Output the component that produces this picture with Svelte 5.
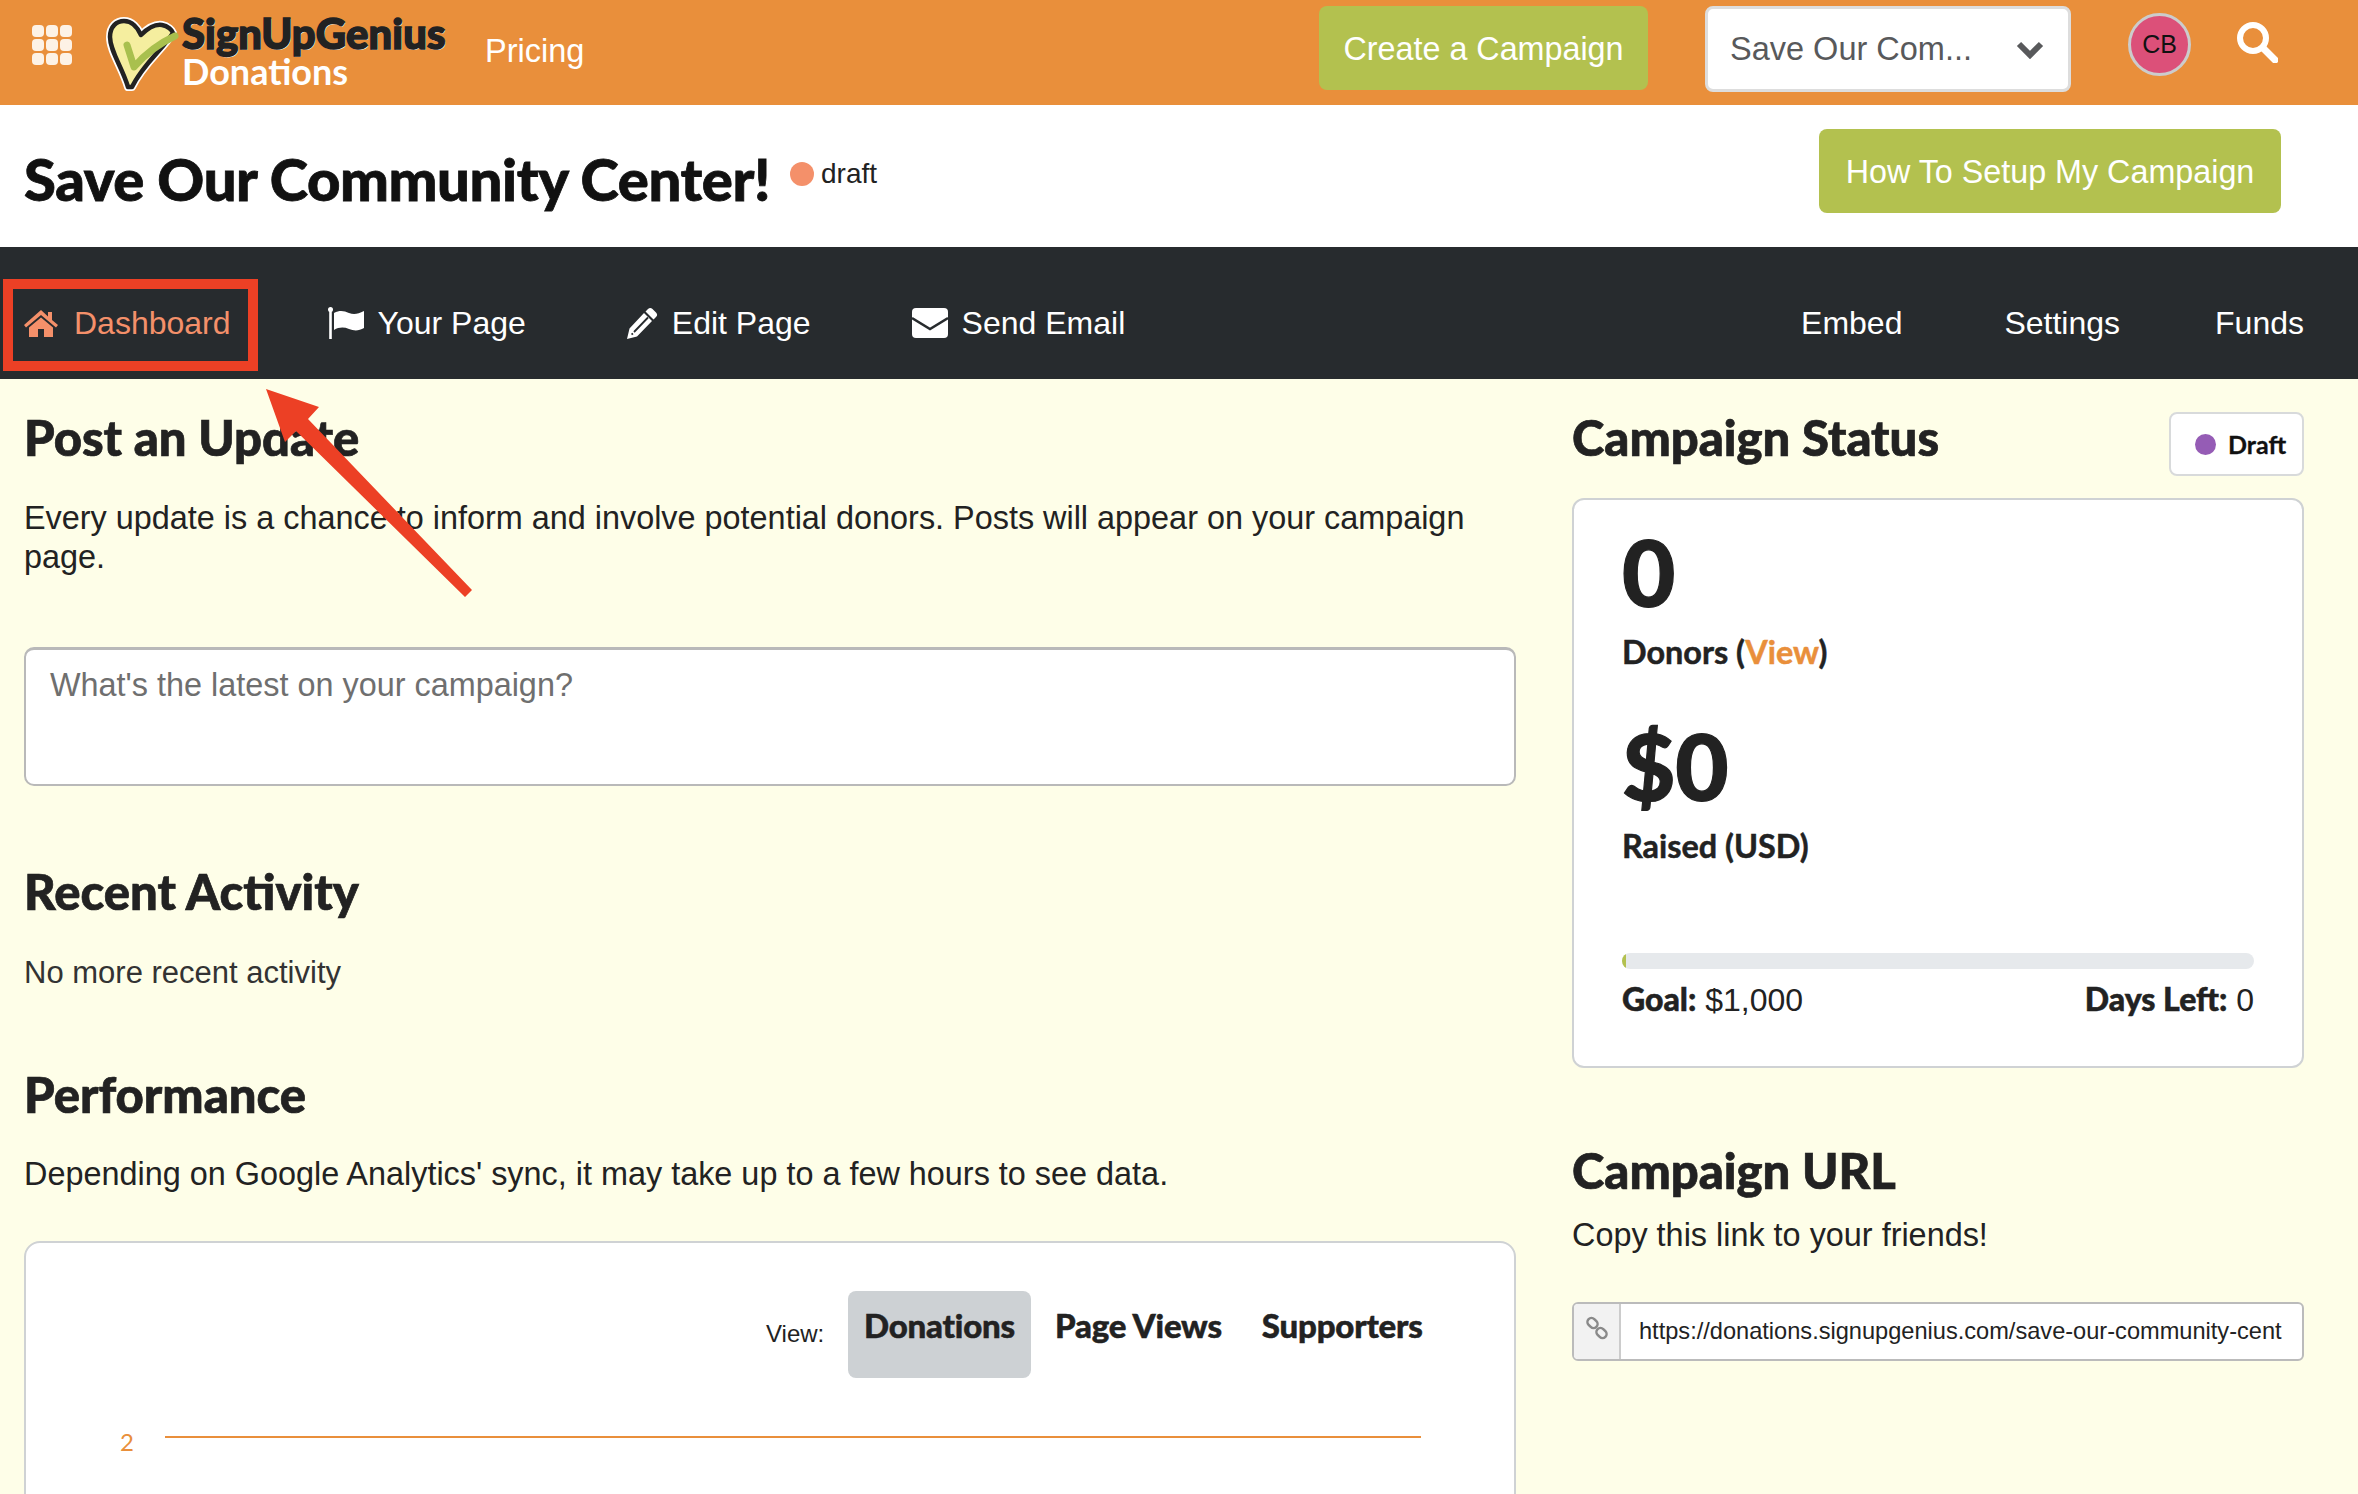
<script>
	const mainNav = [
		{ label: 'Your Page', icon: 'flag' },
		{ label: 'Edit Page', icon: 'pencil' },
		{ label: 'Send Email', icon: 'mail' }
	];
	const sideNav = ['Embed', 'Settings', 'Funds'];
</script>

<div class="page">
	<header class="topbar">
		<div class="grid-icon">
			{#each Array(9) as _}
				<span></span>
			{/each}
		</div>
		<div class="logo">
			<svg class="heart" viewBox="-2 -2 74 74">
				<path d="M20 68C14 48 2 32 2 18 2 7 9 2 16 2c8 0 14 7 17 14C39 10 47 5 54 6c6 1 10 5 11 8C55 30 35 45 24 68Z" fill="#fff" stroke="#fff" stroke-width="8" stroke-linejoin="round" />
				<path d="M20 68C14 48 2 32 2 18 2 7 9 2 16 2c8 0 14 7 17 14C39 10 47 5 54 6c6 1 10 5 11 8C55 30 35 45 24 68Z" fill="#f5ee9f" stroke="#222" stroke-width="4.500" stroke-linejoin="round" />
				<path d="M19 26l7 22C38 34 52 24 67 17" fill="none" stroke="#a9c04e" stroke-width="7" stroke-linecap="round" stroke-linejoin="round" />
			</svg>
			<div class="logo-text">
				<div class="logo-top">SignUpGenius</div>
				<div class="logo-sub">Donations</div>
			</div>
		</div>
		<span class="pricing">Pricing</span>
		<button class="btn create">Create a Campaign</button>
		<div class="select">
			<span>Save Our Com...</span>
			<svg viewBox="0 0 28 20" width="28" height="20"><path d="M3 5l11 11L25 5" fill="none" stroke="#58595b" stroke-width="6" /></svg>
		</div>
		<div class="avatar">CB</div>
		<svg class="search" viewBox="0 0 42 42" width="42" height="42">
			<circle cx="17" cy="17" r="13" fill="none" stroke="#fff" stroke-width="6" />
			<path d="M27 27l12 12" stroke="#fff" stroke-width="7" stroke-linecap="round" />
		</svg>
	</header>

	<div class="titlebar">
		<h1>Save Our Community Center!</h1>
		<span class="status-dot"></span>
		<span class="status-text">draft</span>
		<button class="btn howto">How To Setup My Campaign</button>
	</div>

	<nav class="nav">
		<a class="item active" href="#top">
			<svg viewBox="0 0 34 28" width="34" height="28"><path d="M17 1L0 16l2 2.500L17 6l15 12.500 2-2.500-6-5V3h-4v4.500zM5 18.500V28h9v-8h6v8h9v-9.500L17 8.500z" fill="#f4906a" /></svg>
			Dashboard
		</a>
		{#each mainNav as n}
			<a class="item" href="#top">
				{#if n.icon === 'flag'}
					<svg viewBox="0 0 36 32" width="36" height="32"><circle cx="2.500" cy="2.500" r="2.500" fill="#fff" /><path d="M1.200 3h2.600v29H1.200zM6 6c6-3 10-2 15 0s9 1 15-2v17c-5 3-10 3-15 1s-10-2-15 1z" fill="#fff" /></svg>
				{:else if n.icon === 'pencil'}
					<svg viewBox="0 0 31 32" width="31" height="32"><path d="M21 2c1.500-1.500 3-1.500 4.500 0l3.500 3.500c1.500 1.500 1.500 3 0 4.500l-2.500 2.500-8-8zM17 6l8 8L10 29.500 0 32l2.500-10.500z" fill="#fff" /><path d="M7 25L21 10.500M4.500 27.500l1.500-1" stroke="#272b2e" stroke-width="1.800" /></svg>
				{:else}
					<svg viewBox="0 0 36 30" width="36" height="30"><rect width="36" height="30" rx="4" fill="#fff" /><path d="M0 10l18 11 18-11" fill="none" stroke="#272b2e" stroke-width="2.500" /></svg>
				{/if}
				{n.label}
			</a>
		{/each}
		<div class="side">
			{#each sideNav as s}
				<a class="item" href="#top">{s}</a>
			{/each}
		</div>
	</nav>

	<main class="content">
		<section class="left">
			<h2>Post an Update</h2>
			<p class="intro">Every update is a chance to inform and involve potential donors. Posts will appear on your campaign page.</p>
			<div class="textbox">What's the latest on your campaign?</div>
			<h2 class="recent">Recent Activity</h2>
			<p class="none">No more recent activity</p>
			<h2 class="perf">Performance</h2>
			<p class="sync">Depending on Google Analytics' sync, it may take up to a few hours to see data.</p>
			<div class="chart-card">
				<div class="tabs">
					<span class="view">View:</span>
					<span class="tab on">Donations</span>
					<span class="tab">Page Views</span>
					<span class="tab">Supporters</span>
				</div>
				<div class="axis">
					<span>2</span>
					<div class="line"></div>
				</div>
			</div>
		</section>

		<aside class="right">
			<div class="status-head">
				<h2>Campaign Status</h2>
				<div class="badge"><i></i>Draft</div>
			</div>
			<div class="card">
				<div class="big">0</div>
				<div class="label">Donors (<span class="orange">View</span>)</div>
				<div class="big money">$0</div>
				<div class="label">Raised (USD)</div>
				<div class="progress"><div class="fill"></div></div>
				<div class="meta">
					<span><b>Goal:</b> $1,000</span>
					<span><b>Days Left:</b> 0</span>
				</div>
			</div>
			<h2 class="url-head">Campaign URL</h2>
			<p class="copy">Copy this link to your friends!</p>
			<div class="url">
				<div class="addon">
					<svg viewBox="0 0 24 24" width="24" height="24" fill="none" stroke="#8a8a8a" stroke-width="2.500"><rect x="2" y="3" width="11" height="8" rx="4" transform="rotate(45 7.500 7)" /><rect x="11" y="13" width="11" height="8" rx="4" transform="rotate(45 16.500 17)" /></svg>
				</div>
				<div class="url-text">https://donations.signupgenius.com/save-our-community-cent</div>
			</div>
		</aside>
	</main>

	<!-- annotation drawn on top of the screenshot -->
	<div class="mark"></div>
	<svg class="arrow" viewBox="0 0 2358 1494" width="2358" height="1494">
		<path d="M266 389L319 407 308 419 472 590 465 597 296 431 285 442Z" fill="#ec4025" />
	</svg>
</div>

<style>
	:global(body) {
		margin: 0;
		background: #fefee8;
	}

	.page {
		position: relative;
		width: 2358px;
		height: 1494px;
		overflow: hidden;
		font-family: 'Liberation Sans', Arial, sans-serif;
		color: #222;
		background: #fefee8;
	}

	h1,
	h2,
	p {
		margin: 0;
	}

	h2 {
		font-family: Lato, sans-serif;
		font-weight: 900;
		font-size: 49px;
		line-height: 58px;
		color: #222;
		-webkit-text-stroke: 0.7px #222;
	}

	.topbar {
		height: 105px;
		background: #e98f3b;
		display: flex;
		align-items: center;
		padding-left: 32px;
		box-sizing: border-box;
	}

	.grid-icon {
		display: grid;
		grid-template-columns: repeat(3, 12px);
		grid-auto-rows: 12px;
		gap: 2px;
		width: 40px;
		margin-top: -16px;
	}

	.grid-icon span {
		background: #fdf2e6;
		border-radius: 4px;
	}

	.logo {
		display: flex;
		margin-left: 34px;
		width: 379px;
	}

	.heart {
		width: 74px;
		height: 74px;
		flex: none;
		margin-top: 2px;
	}

	.logo-text {
		margin-left: 2px;
		font-family: Lato, sans-serif;
		font-weight: 900;
		margin-top: -4px;
	}

	.logo-top {
		font-size: 42px;
		line-height: 44px;
		color: #222;
		text-shadow: 1px 1px 0 #fff;
		-webkit-text-stroke: 1.5px #222;
	}

	.logo-sub {
		font-size: 36px;
		line-height: 32px;
		font-weight: 700;
		color: #fff;
	}

	.pricing {
		font-size: 32.5px;
		color: #fff;
		width: 834px;
		flex: none;
		box-sizing: border-box;
		margin-top: -2px;
	}

	.btn {
		border: 0;
		border-radius: 8px;
		background: #b3c14f;
		color: #fff;
		font-family: inherit;
		font-size: 32.3px;
		padding: 2px 0 0;
	}

	.create {
		width: 329px;
		height: 84px;
		margin-top: -9px;
	}

	.select {
		width: 366px;
		height: 86px;
		margin-left: 57px;
		margin-top: -7px;
		box-sizing: border-box;
		background: #fff;
		border: 3px solid #ddd;
		border-radius: 8px;
		display: flex;
		align-items: center;
		justify-content: space-between;
		padding: 0 24px 0 22px;
		font-size: 32.5px;
		color: #58595b;
	}

	.avatar {
		width: 63px;
		height: 63px;
		margin-left: 57px;
		margin-top: -17px;
		box-sizing: border-box;
		border: 3px solid #ccc;
		border-radius: 50%;
		background: #dc5079;
		color: #111;
		font-size: 25px;
		display: flex;
		align-items: center;
		justify-content: center;
	}

	.search {
		margin-left: 45px;
		margin-top: -22px;
	}

	.titlebar {
		height: 142px;
		background: #fff;
		display: flex;
		align-items: center;
		padding-left: 24px;
		box-sizing: border-box;
	}

	h1 {
		font-family: Lato, sans-serif;
		font-weight: 900;
		font-size: 58px;
		letter-spacing: -0.4px;
		color: #111;
		-webkit-text-stroke: 0.8px #111;
		width: 766px;
		flex: none;
		white-space: nowrap;
		margin-top: 4px;
	}

	.status-dot {
		width: 24px;
		height: 24px;
		border-radius: 50%;
		background: #f4906a;
		margin-top: -4px;
	}

	.status-text {
		font-size: 28px;
		margin-left: 7px;
		margin-top: -4px;
		width: 998px;
		flex: none;
	}

	.howto {
		width: 462px;
		height: 84px;
		margin-top: -10px;
	}

	.nav {
		height: 132px;
		background: #272b2e;
		display: flex;
		align-items: center;
		padding: 20px 54px 0 24px;
		box-sizing: border-box;
	}

	.item {
		display: flex;
		align-items: center;
		gap: 14px;
		color: #fff;
		font-size: 32px;
		text-decoration: none;
		margin-right: 101px;
		white-space: nowrap;
	}

	.active {
		color: #f4906a;
		margin-right: 97px;
		gap: 16px;
	}

	.side {
		margin-left: auto;
		display: flex;
	}

	.side .item {
		margin-right: 0;
		margin-left: 102px;
	}

	.side .item:last-child {
		margin-left: 95px;
	}

	.content {
		display: flex;
		padding: 0 54px 0 24px;
	}

	.left {
		width: 1492px;
		flex: none;
		padding-top: 29px;
	}

	.right {
		width: 732px;
		margin-left: 56px;
		flex: none;
		padding-top: 29px;
	}

	.intro {
		font-size: 32.4px;
		line-height: 39px;
		margin-top: 33px;
		width: 1480px;
	}

	.textbox {
		margin-top: 70px;
		height: 139px;
		box-sizing: border-box;
		background: #fff;
		border: 2px solid #b9b9b9;
		border-top-width: 3px;
		border-radius: 10px;
		padding: 17px 24px;
		font-size: 32.4px;
		color: #6f6f6f;
	}

	.recent {
		margin-top: 76px;
	}

	.none {
		font-size: 31px;
		line-height: 39px;
		margin-top: 33px;
		color: #333;
	}

	.perf {
		margin-top: 73px;
	}

	.sync {
		font-size: 32.4px;
		line-height: 39px;
		margin-top: 32px;
	}

	.chart-card {
		margin-top: 47px;
		height: 300px;
		box-sizing: border-box;
		background: #fff;
		border: 2px solid #cfd2d4;
		border-radius: 16px;
	}

	.tabs {
		display: flex;
		align-items: flex-start;
		padding: 48px 0 0 740px;
	}

	.view {
		font-size: 24px;
		margin-top: 29px;
		width: 82px;
		flex: none;
	}

	.tab {
		font-family: Lato, sans-serif;
		font-weight: 900;
		font-size: 33px;
		letter-spacing: -0.2px;
		-webkit-text-stroke: 0.5px #222;
		padding: 14px 16px 33px;
		height: 87px;
		box-sizing: border-box;
		border-radius: 8px;
		white-space: nowrap;
		color: #222;
		margin-right: 8px;
	}

	.tab.on {
		background: #cdd1d4;
	}

	.axis {
		display: flex;
		align-items: flex-start;
		padding: 58px 0 0 94px;
	}

	.axis span {
		font-family: Lato, sans-serif;
		font-size: 24px;
		line-height: 30px;
		color: #e98f3b;
		margin-top: -9px;
	}

	.line {
		width: 1256px;
		height: 2px;
		background: #e98f3b;
		margin-left: 31px;
	}

	.status-head {
		display: flex;
		justify-content: space-between;
		align-items: flex-start;
		height: 90px;
	}

	.badge {
		width: 135px;
		height: 64px;
		margin-top: 4px;
		box-sizing: border-box;
		border: 2px solid #d8dadb;
		border-radius: 8px;
		background: #fff;
		display: flex;
		align-items: center;
		padding-left: 24px;
		font-family: Lato, sans-serif;
		font-weight: 700;
		font-size: 25px;
		color: #111;
		-webkit-text-stroke: 0.3px #111;
	}

	.badge i {
		width: 21px;
		height: 21px;
		border-radius: 50%;
		background: #955cb5;
		margin-right: 12px;
	}

	.card {
		height: 570px;
		box-sizing: border-box;
		background: #fff;
		border: 2px solid #cfd2d4;
		border-radius: 12px;
		padding: 20px 48px 0;
	}

	.big {
		font-family: Lato, sans-serif;
		font-weight: 900;
		font-size: 92px;
		line-height: 104px;
		-webkit-text-stroke: 1.2px #222;
	}

	.money {
		margin-top: 42px;
	}

	.label {
		font-family: Lato, sans-serif;
		font-weight: 700;
		font-size: 32.4px;
		line-height: 40px;
		margin-top: 8px;
		-webkit-text-stroke: 0.5px currentColor;
	}

	.orange {
		color: #e98f3b;
	}

	.progress {
		height: 16px;
		margin-top: 87px;
		background: #e6e9ec;
		border-radius: 8px;
		overflow: hidden;
	}

	.fill {
		width: 4px;
		height: 100%;
		background: #b3c14f;
	}

	.meta {
		display: flex;
		justify-content: space-between;
		font-size: 32px;
		line-height: 40px;
		margin-top: 10px;
	}

	.meta b {
		font-family: Lato, sans-serif;
		font-weight: 900;
		-webkit-text-stroke: 0.5px #222;
	}

	.url-head {
		margin-top: 73px;
	}

	.copy {
		font-size: 32.4px;
		line-height: 40px;
		margin-top: 16px;
	}

	.url {
		display: flex;
		height: 59px;
		margin-top: 47px;
		box-sizing: border-box;
		border: 2px solid #bbb;
		border-radius: 6px;
		overflow: hidden;
		background: #fff;
	}

	.addon {
		width: 47px;
		flex: none;
		background: #f2f2f2;
		border-right: 2px solid #ccc;
		display: flex;
		justify-content: center;
		padding-top: 12px;
		box-sizing: border-box;
	}

	.url-text {
		font-size: 23.6px;
		line-height: 55px;
		padding-left: 18px;
		white-space: nowrap;
	}

	.mark {
		position: absolute;
		left: 3px;
		top: 279px;
		width: 255px;
		height: 92px;
		box-sizing: border-box;
		border: 10px solid #ec4025;
	}

	.arrow {
		position: absolute;
		left: 0;
		top: 0;
	}
</style>
